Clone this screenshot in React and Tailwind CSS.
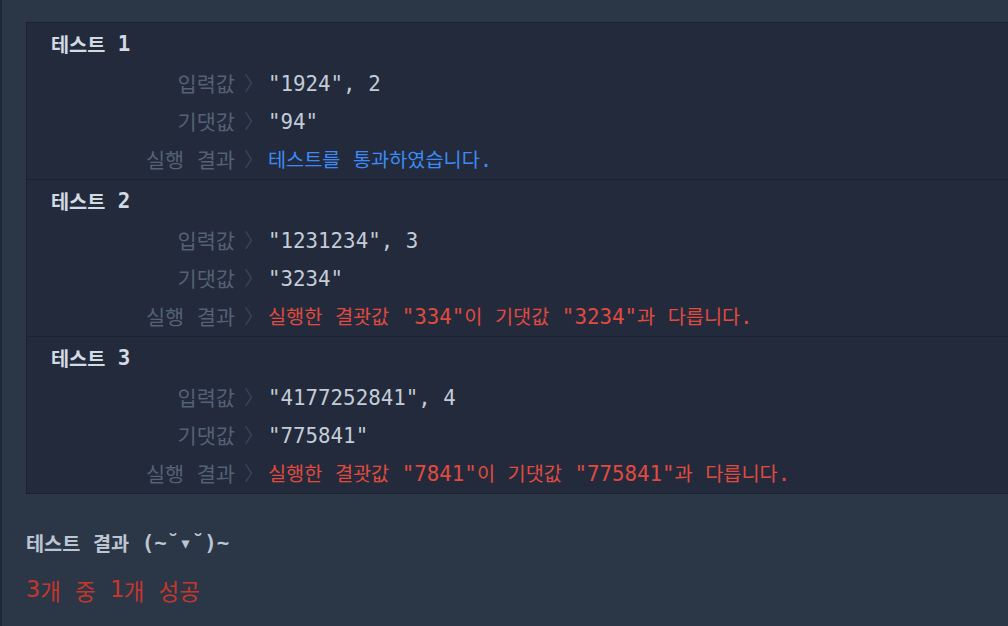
const tests = [
  {
    title: "테스트 1",
    input: '"1924", 2',
    expected: '"94"',
    pass: true,
    result: "테스트를 통과하였습니다.",
  },
  {
    title: "테스트 2",
    input: '"1231234", 3',
    expected: '"3234"',
    pass: false,
    result: '실행한 결괏값 "334"이 기댓값 "3234"과 다릅니다.',
  },
  {
    title: "테스트 3",
    input: '"4177252841", 4',
    expected: '"775841"',
    pass: false,
    result: '실행한 결괏값 "7841"이 기댓값 "775841"과 다릅니다.',
  },
];

const mono = {
  fontFamily: '"DejaVu Sans Mono", "Noto Sans CJK KR", monospace',
};

// hangul runs get their own size so the grid matches the original
function Mixed({ text, ko = "text-[19.7px]" }) {
  const parts = text.split(/([\u3000-\u303f\uac00-\ud7af]+)/);
  return parts.map((p, i) =>
    i % 2 === 1 ? (
      <span
        key={i}
        className={ko}
        style={{ fontFamily: '"Noto Sans CJK KR", sans-serif' }}
      >
        {p}
      </span>
    ) : (
      <span key={i}>{p}</span>
    )
  );
}

function Row({ label, value, className }) {
  return (
    <div className="flex h-[38px] items-center whitespace-pre">
      <div className="w-[208px] text-right text-[#556174]">
        <Mixed text={label} ko="text-[20.8px]" />
      </div>
      <div className="w-[33px] pl-[9px] text-[#3a4557]">
        <Mixed text="〉" />
      </div>
      <div className={className}>
        <Mixed text={value} />
      </div>
    </div>
  );
}

export default function App() {
  return (
    <div
      className="min-h-[626px] w-[1008px] overflow-hidden border-l-2 border-[#1f2735] bg-[#2b3647] text-[20.8px] leading-none"
      style={mono}
    >
      <div className="h-[22px]" />
      <div className="ml-[24px] w-[1000px] border border-r-0 border-[#1b2230] bg-[#222a3b]">
        {tests.map((t, i) => (
          <div
            key={t.title}
            className={i > 0 ? "border-t border-[#1b2230]" : ""}
          >
            <div className="flex h-[42px] items-center whitespace-pre pl-[24px] font-bold text-[#d3dae3]">
              <Mixed text={t.title} />
            </div>
            <Row label="입력값" value={t.input} className="text-[#c3ccd8]" />
            <Row
              label="기댓값"
              value={t.expected}
              className="text-[#c3ccd8]"
            />
            <Row
              label="실행 결과"
              value={t.result}
              className={t.pass ? "text-[#3d8af7]" : "text-[#e04a3f]"}
            />
          </div>
        ))}
      </div>
      <div className="pl-[24px] pt-[38px] text-[#bcc5d1]">
        <div className="flex h-[22px] items-center whitespace-pre font-bold">
          <Mixed text="테스트 결과 (~˘▾˘)~" />
        </div>
        <div className="mt-[23px] flex h-[26px] items-center whitespace-pre text-[23.5px] text-[#c4372d]">
          <Mixed text="3개 중 1개 성공" ko="text-[22.4px]" />
        </div>
      </div>
    </div>
  );
}
